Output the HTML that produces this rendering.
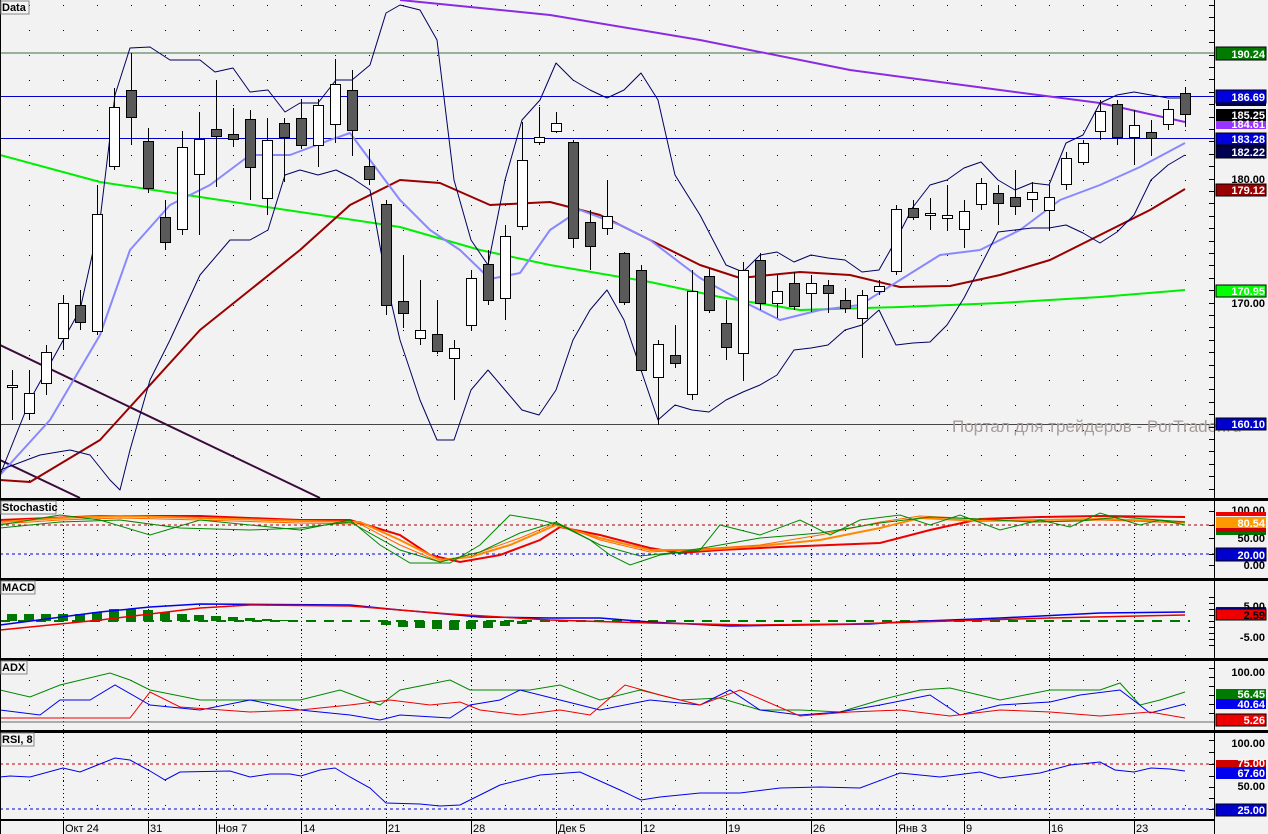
<!DOCTYPE html>
<html><head><meta charset="utf-8"><style>
html,body{margin:0;padding:0;background:#f2f2f2;width:1268px;height:834px;overflow:hidden}
svg{display:block;font-family:"Liberation Sans",sans-serif}
.ax{font:bold 11px "Liberation Sans",sans-serif}
</style></head><body>
<svg id="s" width="1268" height="834" viewBox="0 0 1268 834" xmlns="http://www.w3.org/2000/svg">
<rect width="1268" height="834" fill="#f2f2f2"/>
<defs>
<pattern id="dots" width="34" height="25" patternUnits="userSpaceOnUse" x="29" y="5"><rect width="1" height="1" fill="#000"/></pattern>
</defs>
<g id="grid">
<rect x="2" y="2" width="1212" height="496" fill="url(#dots)"/>
<rect x="2" y="502" width="1212" height="76" fill="url(#dots)"/>
<rect x="2" y="582" width="1212" height="76" fill="url(#dots)"/>
<rect x="2" y="662" width="1212" height="68" fill="url(#dots)"/>
<rect x="2" y="734" width="1212" height="85" fill="url(#dots)"/>
</g>
<g stroke-width="1" fill="none">
<line x1="0" y1="53" x2="1215" y2="53" stroke="#3c6e3c"/>
<line x1="0" y1="96.5" x2="1215" y2="96.5" stroke="#0000cc"/>
<line x1="0" y1="138.5" x2="1215" y2="138.5" stroke="#0000cc"/>
<line x1="0" y1="424.5" x2="1215" y2="424.5" stroke="#444"/>
</g>
<text x="952" y="432" font-size="17" fill="#a89c9c">Портал для трейдеров - PorTrader.ru</text>
<g fill="none" stroke-linejoin="round">
<polyline stroke="#3a0a3a" stroke-width="2" points="0,345 320,498"/>
<polyline stroke="#3a0a3a" stroke-width="2" points="0,460 80,498"/>
<polyline stroke="#8a2be2" stroke-width="2" points="400,0 550,15 700,40 850,70 1000,90 1100,103 1185,122"/>
<polyline stroke="#00ee00" stroke-width="2" points="0,155 100,182 200,197 300,212 400,227 480,250 550,265 650,282 720,297 800,310 900,307 1000,303 1100,297 1185,290"/>
<polyline stroke="#990000" stroke-width="2" points="0,480 30,482 100,440 200,330 300,250 350,205 400,180 440,183 490,205 550,202 600,215 640,235 700,265 740,278 800,272 850,275 900,287 950,286 1000,275 1050,260 1100,235 1150,210 1185,189"/>
<polyline stroke="#8888ff" stroke-width="2" points="0,475 50,420 100,335 130,250 170,205 210,185 250,155 290,155 330,140 350,133 370,160 400,200 430,230 460,250 490,279 520,273 550,230 580,210 620,225 650,240 700,278 740,300 780,320 820,310 860,305 900,280 940,255 980,250 1020,230 1060,200 1100,185 1140,167 1185,143"/>
<polyline stroke="#000060" stroke-width="1" points="0,475 30,400 80,310 100,220 115,95 130,48 150,47 170,60 200,60 215,72 233,68 250,92 268,90 285,112 300,103 318,103 336,80 352,80 370,65 386,13 400,5 420,10 437,40 454,180 471,240 488,265 505,180 522,120 540,100 556,63 573,80 590,90 607,98 624,90 641,73 658,100 675,175 700,215 726,265 743,272 760,255 777,252 794,262 811,255 828,258 845,260 862,272 879,270 896,240 913,207 930,185 947,180 964,168 981,162 998,180 1015,190 1032,183 1049,185 1066,143 1083,135 1100,103 1117,95 1134,92 1151,95 1168,98 1185,98"/>
<polyline stroke="#000060" stroke-width="1" points="0,470 40,455 70,450 90,455 110,480 120,490 130,450 150,380 170,340 200,275 230,240 250,240 268,230 285,175 300,170 318,175 336,170 352,178 370,190 386,280 400,340 420,400 437,440 454,440 471,390 488,370 505,390 522,410 539,415 556,390 573,340 590,310 607,290 624,320 641,370 658,420 675,405 692,410 709,412 726,400 743,392 760,385 777,375 794,350 811,348 828,345 845,330 862,325 879,310 896,345 913,343 930,342 947,325 964,298 981,265 998,232 1015,230 1032,228 1049,228 1066,225 1083,233 1100,243 1117,232 1134,215 1151,180 1168,165 1185,155"/>
</g>
<g id="candles"></g>

<!-- week vertical dotted lines -->
<g id="wk"></g>

<!-- Stochastic -->
<g fill="none">
<line x1="0" y1="525" x2="1215" y2="525" stroke="#aa0000" stroke-dasharray="3,3"/>
<line x1="0" y1="554" x2="1215" y2="554" stroke="#0000dd" stroke-dasharray="3,3"/>
<polyline stroke="#ee0000" stroke-width="2" points="0,520 100,516 200,516 300,520 350,520 400,535 430,555 460,562 500,555 540,540 560,527 600,535 650,548 680,553 720,550 780,547 830,545 880,543 930,530 980,519 1040,517 1100,516 1185,517"/>
<polyline stroke="#ff8800" stroke-width="2" points="0,522 60,518 120,516 200,518 300,521 360,522 400,540 440,560 470,557 510,545 556,525 600,538 650,550 700,550 760,546 820,540 880,528 920,518 980,521 1040,520 1100,519 1185,522"/>
<polyline stroke="#ff6600" stroke-width="1" points="0,524 60,520 120,518 200,520 300,523 360,524 400,545 440,562 480,552 520,538 556,523 600,540 650,552 700,549 760,545 820,535 880,522 920,516 980,519 1040,522 1100,520 1185,523"/>
<polyline stroke="#008800" stroke-width="1" points="0,525 60,515 100,520 150,535 200,520 250,525 300,530 350,520 380,545 410,563 450,563 480,545 510,515 540,520 560,525 590,540 610,555 630,565 660,555 700,550 720,525 760,535 800,520 830,535 860,520 900,515 930,525 960,515 1000,530 1040,520 1070,527 1100,513 1140,525 1160,520 1185,525"/>
<polyline stroke="#008800" stroke-width="1" points="0,528 60,522 120,520 180,528 250,530 300,528 350,522 400,550 440,562 480,552 520,533 556,522 600,545 640,556 680,552 720,545 760,538 820,533 880,523 930,517 980,519 1030,522 1080,521 1120,517 1185,522"/>
</g>

<!-- MACD -->
<g>
<line x1="0" y1="621" x2="1190" y2="621" stroke="#007700" stroke-width="2" stroke-dasharray="10,8"/>
<g fill="#007700" id="hist"></g>
<polyline fill="none" stroke="#0000ee" stroke-width="1.5" points="0,625 100,612 150,607 200,604 350,605 400,610 480,617 550,618 600,618 650,622 730,626 800,625 870,624 900,622 950,620 1000,618 1100,613 1185,612"/>
<polyline fill="none" stroke="#ee0000" stroke-width="1.5" points="0,630 100,620 200,608 250,605 350,606 450,614 550,620 650,623 750,625 850,624 950,621 1050,618 1185,615"/>
</g>

<!-- ADX -->
<g fill="none" stroke-width="1">
<line x1="0" y1="722" x2="1215" y2="722" stroke="#666"/>
<polyline stroke="#008800" points="0,690 30,697 60,685 110,673 130,680 150,690 200,700 250,700 300,700 340,690 380,705 400,690 450,680 470,690 500,690 530,690 560,685 600,700 640,690 680,700 720,698 760,710 800,710 840,712 880,700 920,690 950,688 1000,700 1050,690 1100,690 1120,683 1140,705 1160,700 1185,692"/>
<polyline stroke="#0000ee" points="0,710 40,715 60,700 90,700 115,685 150,705 200,710 250,700 300,710 350,715 380,720 400,715 450,718 470,705 500,700 520,690 560,700 600,710 650,700 700,705 730,690 760,710 800,715 840,712 880,705 930,695 960,715 1000,705 1050,702 1080,695 1120,690 1150,713 1185,704"/>
<polyline stroke="#ee0000" points="0,718 130,718 150,692 180,707 250,712 300,710 350,705 390,700 430,705 460,702 480,710 520,715 560,710 590,715 625,685 660,695 700,705 740,690 800,716 850,712 900,710 950,716 1000,710 1050,712 1100,716 1150,712 1185,718"/>
</g>

<!-- RSI -->
<g fill="none">
<line x1="0" y1="764" x2="1215" y2="764" stroke="#cc0000" stroke-dasharray="3,3"/>
<line x1="0" y1="809" x2="1215" y2="809" stroke="#0000cc" stroke-dasharray="3,3"/>
<polyline stroke="#0000ee" stroke-width="1" points="0,777 10,776 30,777 63,768 80,772 100,764 115,758 130,760 150,771 165,780 180,772 230,771 250,777 270,774 290,774 301,776 320,770 335,768 350,777 370,788 386,803 420,804 440,806 460,805 480,795 500,785 540,775 580,772 620,790 641,800 660,797 700,793 740,793 780,788 820,787 860,788 900,773 940,777 980,772 1000,778 1040,773 1070,765 1100,762 1115,770 1134,772 1151,768 1170,769 1185,771"/>
</g>

<!-- panel borders -->
<g fill="#000">
<rect x="0" y="498" width="1268" height="3"/>
<rect x="0" y="578" width="1268" height="3"/>
<rect x="0" y="658" width="1268" height="3"/>
<rect x="0" y="730" width="1268" height="3"/>
<rect x="0" y="819" width="1215" height="2"/>
<rect x="0" y="0" width="1" height="834"/>
<rect x="1214" y="0" width="1" height="834"/>
</g>

<!-- panel titles -->
<g class="ax">
<rect x="1" y="1" width="28" height="13" fill="#f4f4f4" stroke="#888"/><text x="2" y="11">Data</text>
<rect x="1" y="501" width="55" height="13" fill="#f4f4f4" stroke="#888"/><text x="2" y="511">Stochastic</text>
<rect x="1" y="581" width="34" height="13" fill="#f4f4f4" stroke="#888"/><text x="2" y="591">MACD</text>
<rect x="1" y="661" width="26" height="13" fill="#f4f4f4" stroke="#888"/><text x="2" y="671">ADX</text>
<rect x="1" y="733" width="33" height="13" fill="#f4f4f4" stroke="#888"/><text x="2" y="743">RSI, 8</text>
</g>

<!-- bottom axis -->
<g font-size="11" fill="#000">
<g stroke="#000"><line x1="63.5" y1="821" x2="63.5" y2="834"/><line x1="148.5" y1="821" x2="148.5" y2="834"/><line x1="216.5" y1="821" x2="216.5" y2="834"/><line x1="301.5" y1="821" x2="301.5" y2="834"/><line x1="386.5" y1="821" x2="386.5" y2="834"/><line x1="471.5" y1="821" x2="471.5" y2="834"/><line x1="556.5" y1="821" x2="556.5" y2="834"/><line x1="641.5" y1="821" x2="641.5" y2="834"/><line x1="726.5" y1="821" x2="726.5" y2="834"/><line x1="811.5" y1="821" x2="811.5" y2="834"/><line x1="896.5" y1="821" x2="896.5" y2="834"/><line x1="964.5" y1="821" x2="964.5" y2="834"/><line x1="1049.5" y1="821" x2="1049.5" y2="834"/><line x1="1134.5" y1="821" x2="1134.5" y2="834"/></g>
<text x="65" y="832">Окт 24</text><text x="150" y="832">31</text><text x="218" y="832">Ноя 7</text><text x="303" y="832">14</text><text x="388" y="832">21</text><text x="473" y="832">28</text><text x="558" y="832">Дек 5</text><text x="643" y="832">12</text><text x="728" y="832">19</text><text x="813" y="832">26</text><text x="898" y="832">Янв 3</text><text x="966" y="832">9</text><text x="1051" y="832">16</text><text x="1136" y="832">23</text>
</g>

<!-- right axis ticks -->
<g id="ticks" stroke="#000"></g>

<!-- right axis labels -->
<g class="ax" text-anchor="end">
<rect x="1216" y="47" width="50" height="13" fill="#007a00" stroke="#000"/><text x="1265" y="58" fill="#fff">190.24</text>
<rect x="1216" y="90" width="50" height="13" fill="#0000dd" stroke="#000"/><text x="1265" y="101" fill="#fff">186.69</text>
<rect x="1216" y="103" width="50" height="3" fill="#000040"/>
<rect x="1216" y="109" width="50" height="12" fill="#000"/><text x="1265" y="119" fill="#fff">185.25</text>
<rect x="1216" y="121" width="50" height="8" fill="#9933ff"/><text x="1265" y="128" fill="#fff">184.61</text>
<rect x="1216" y="133" width="50" height="12" fill="#0000dd" stroke="#000"/><text x="1265" y="143" fill="#fff">183.28</text>
<rect x="1216" y="146" width="50" height="12" fill="#000050" stroke="#000"/><text x="1265" y="156" fill="#fff">182.22</text>
<text x="1265" y="183">180.00</text>
<rect x="1216" y="184" width="50" height="12" fill="#990000" stroke="#000"/><text x="1265" y="194" fill="#fff">179.12</text>
<rect x="1216" y="285" width="50" height="12" fill="#00ff00" stroke="#000"/><text x="1265" y="295" fill="#fff">170.95</text>
<text x="1265" y="307">170.00</text>
<rect x="1216" y="418" width="50" height="12" fill="#0000cc" stroke="#000"/><text x="1265" y="428" fill="#fff">160.10</text>
<text x="1265" y="514">100.00</text>
<rect x="1216" y="512" width="50" height="4" fill="#ee0000"/>
<rect x="1216" y="517" width="50" height="11" fill="#ff9900"/><text x="1265" y="527" fill="#fff">80.54</text>
<rect x="1216" y="528" width="50" height="4" fill="#cc0000"/>
<rect x="1216" y="532" width="50" height="3" fill="#007700"/>
<text x="1265" y="542">50.00</text>
<rect x="1216" y="548" width="50" height="13" fill="#0000cc" stroke="#000"/><text x="1265" y="559" fill="#fff">20.00</text>
<text x="1265" y="569">0.00</text>
<rect x="1216" y="607" width="50" height="2" fill="#0000ee"/>
<text x="1265" y="610">5.00</text>
<rect x="1216" y="609" width="50" height="11" fill="#ee0000" stroke="#000"/><text x="1265" y="619" fill="#000">2.59</text>
<text x="1265" y="641">-5.00</text>
<text x="1265" y="676">100.00</text>
<rect x="1216" y="689" width="50" height="11" fill="#007a00"/><text x="1265" y="698" fill="#fff">56.45</text>
<rect x="1216" y="699" width="50" height="10" fill="#0000ee"/><text x="1265" y="708" fill="#fff">40.64</text>
<rect x="1216" y="714" width="50" height="12" fill="#ee0000" stroke="#000"/><text x="1265" y="724" fill="#fff">5.26</text>
<text x="1265" y="747">100.00</text>
<rect x="1216" y="760" width="50" height="7" fill="#cc0000"/><text x="1265" y="767" fill="#fff">75.00</text>
<rect x="1216" y="767" width="50" height="12" fill="#0000ee"/><text x="1265" y="777" fill="#fff">67.60</text>
<text x="1265" y="790">50.00</text>
<rect x="1216" y="804" width="50" height="12" fill="#0000cc" stroke="#000"/><text x="1265" y="814" fill="#fff">25.00</text>
</g>
</svg>
<script>
var NS="http://www.w3.org/2000/svg";
function el(p,t,a){var e=document.createElementNS(NS,t);for(var k in a)e.setAttribute(k,a[k]);p.appendChild(e);return e;}
var C=[[387,385,370,420],[413,393,370,420],[383,352,345,395],[338,303,295,350],[305,322,290,330],[331,214,185,335],[166,107,88,170],[90,117,53,145],[141,188,128,193],[217,242,200,250],[229,147,131,235],[174,139,112,235],[129,136,80,187],[134,139,108,147],[119,167,110,200],[198,140,118,215],[123,137,118,182],[118,145,99,149],[145,105,99,167],[124,84,59,143],[90,130,70,156],[166,179,149,185],[204,305,200,315],[301,313,255,328],[338,330,280,345],[334,351,300,354],[358,348,340,400],[325,278,270,330],[264,300,250,305],[298,236,225,320],[226,160,122,230],[142,137,107,145],[131,123,112,133],[142,238,140,248],[222,246,210,270],[228,216,180,235],[253,302,252,305],[270,370,265,372],[377,344,340,425],[355,363,325,368],[394,291,270,400],[276,310,268,313],[323,347,300,360],[353,270,262,380],[260,303,253,310],[303,291,275,318],[283,306,272,310],[293,283,275,312],[285,293,280,313],[300,308,288,313],[318,295,290,358],[291,286,280,295],[271,209,205,275],[208,217,200,220],[215,213,198,230],[218,215,185,230],[229,211,200,248],[204,183,178,210],[193,203,185,225],[197,206,170,215],[199,192,182,212],[210,197,185,230],[184,158,152,190],[162,143,140,165],[131,111,100,140],[104,137,100,145],[137,125,110,165],[132,138,120,155],[124,109,100,130],[93,114,87,127]];
var g=document.getElementById("candles");
C.forEach(function(c,i){var x=12+17*i;var o=c[0],cl=c[1],bull=cl<o;
el(g,"line",{x1:x+.5,y1:c[2],x2:x+.5,y2:c[3],stroke:"#000","stroke-width":1});
var t=Math.min(o,cl),h=Math.max(Math.abs(o-cl),2);
el(g,"rect",{x:x-5+.5,y:t+.5,width:10,height:h,fill:bull?"#fff":"#5a5a5a",stroke:"#000","stroke-width":1});});
var hg=document.getElementById("hist");
var H=[[12,614,7],[29,614,7],[46,614,7],[63,614,7],[80,614,7],[97,612,9],[114,609,12],[131,609,12],[148,610,11],[165,612,9],[182,614,7],[199,615,6],[216,616,5],[233,617,4],[250,618,3],[267,619,2],[284,620,1],[386,621,4],[403,621,6],[420,621,7],[437,621,8],[454,621,9],[471,621,8],[488,621,7],[505,621,5],[522,621,3]];
H.forEach(function(b){el(hg,"rect",{x:b[0]-5,y:b[1],width:10,height:b[2]});});
var wk=document.getElementById("wk");
[63,148,216,301,386,471,556,641,726,811,896,964,1049,1134].forEach(function(x){
[[501,578],[581,658],[661,730],[733,819]].forEach(function(r){el(wk,"line",{x1:x+.5,y1:r[0],x2:x+.5,y2:r[1],stroke:"#000","stroke-dasharray":"1,3","stroke-width":1});});});
var tk=document.getElementById("ticks");
for(var y=5;y<498;y+=12.4){el(tk,"line",{x1:1209,y1:Math.round(y)+.5,x2:1214,y2:Math.round(y)+.5});}
[511,525,538,554,565,597,603,609,615,621,627,633,639,645,668,677,686,695,704,713,740,752,764,776,787,798,809].forEach(function(y){el(tk,"line",{x1:1209,y1:y+.5,x2:1214,y2:y+.5});});
</script>
</body></html>
